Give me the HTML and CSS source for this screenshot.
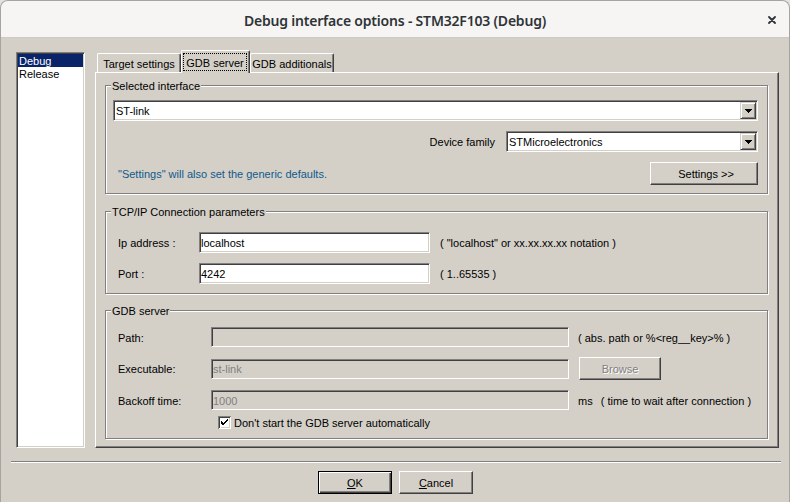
FILE: index.html
```html
<!DOCTYPE html>
<html>
<head>
<meta charset="utf-8">
<title>Debug interface options</title>
<link rel="stylesheet" href="styles.css">
</head>
<body>
<div class="window">
  <div class="titlebar">
    <span></span>
    <span class="title">Debug interface options - STM32F103 (Debug)</span>
    <span class="close"><svg width="8" height="8" viewBox="0 0 8 8"><path d="M1 1 L7 7 M7 1 L1 7" stroke="#2e3436" stroke-width="1.8" stroke-linecap="round"/></svg></span>
  </div>
  <div class="client">
    <div class="main">
      <div class="list">
        <div class="item sel">Debug</div>
        <div class="item">Release</div>
      </div>
      <div class="tabs">
        <div class="tabrow">
          <div class="tab t1">Target settings</div>
          <div class="tab active"><span class="focus">GDB server</span></div>
          <div class="tab t3">GDB additionals</div>
        </div>
        <div class="panel">
          <div class="group g1">
            <div class="gtitle">Selected interface</div>
            <div class="combo wide"><span class="ctext">ST-link</span><span class="arrow"><svg width="7" height="4" viewBox="0 0 7 4"><polygon points="0,0 7,0 3.5,4" fill="#000"/></svg></span></div>
            <div class="row family-row">
              <span class="lbl-family">Device family</span>
              <div class="combo family"><span class="ctext">STMicroelectronics</span><span class="arrow"><svg width="7" height="4" viewBox="0 0 7 4"><polygon points="0,0 7,0 3.5,4" fill="#000"/></svg></span></div>
            </div>
            <div class="row settings-row">
              <span class="hint">"Settings" will also set the generic defaults.</span>
              <button class="btn settings">Settings &gt;&gt;</button>
            </div>
          </div>
          <div class="group g2">
            <div class="gtitle">TCP/IP Connection parameters</div>
            <div class="row field-row ip-row">
              <span class="lbl lbl2">Ip address :</span>
              <div class="input in2">localhost</div>
              <span class="note">( "localhost" or xx.xx.xx.xx notation )</span>
            </div>
            <div class="row field-row port-row">
              <span class="lbl lbl2">Port :</span>
              <div class="input in2">4242</div>
              <span class="note">( 1..65535 )</span>
            </div>
          </div>
          <div class="group g3">
            <div class="gtitle">GDB server</div>
            <div class="row field-row r3 path-row">
              <span class="lbl lbl3">Path:</span>
              <div class="input in3 disabled"></div>
              <span class="note n3">( abs. path or %&lt;reg__key&gt;% )</span>
            </div>
            <div class="row field-row r3 exe-row">
              <span class="lbl lbl3">Executable:</span>
              <div class="input in3 disabled">st-link</div>
              <button class="btn browse" disabled>Browse</button>
            </div>
            <div class="row field-row r3 back-row">
              <span class="lbl lbl3">Backoff time:</span>
              <div class="input in3 disabled">1000</div>
              <span class="note n3">ms</span>
              <span class="note wait">( time to wait after connection )</span>
            </div>
            <div class="row check-row">
              <span class="checkbox"><svg width="13" height="13" viewBox="0 0 13 13"><rect x="0" y="0" width="13" height="13" fill="#fff"/><path d="M0.5 12.5 V0.5 H12.5" stroke="#808080" fill="none"/><path d="M1.5 11.5 V1.5 H11.5" stroke="#404040" fill="none"/><path d="M1.5 12.5 H12.5 V0.5" stroke="#fff" fill="none"/><path d="M2.5 11.5 H11.5 V1.5" stroke="#d4d0c8" fill="none"/><polygon points="3,5 5,7 9.5,2.5 9.5,5 5,9.5 3,7.5" fill="#000"/></svg></span>
              <span class="check-label">Don't start the GDB server automatically</span>
            </div>
          </div>
        </div>
      </div>
    </div>
    <div class="sep"></div>
    <div class="buttons">
      <button class="btn dlg default"><u>O</u>K</button>
      <button class="btn dlg"><u>C</u>ancel</button>
    </div>
  </div>
</div>
</body>
</html>
```
FILE: styles.css
```css
html, body {
  margin: 0;
  padding: 0;
  background: #e4e2df;
}
body {
  width: 790px;
  height: 502px;
  overflow: hidden;
}
.window {
  box-sizing: border-box;
  width: 790px;
  height: 502px;
  border: 1px solid #a7a39e;
  border-bottom: none;
  border-radius: 8px 8px 0 0;
  background: #d4d0c8;
  overflow: hidden;
  display: flex;
  flex-direction: column;
  font-family: "Liberation Sans", Arial, sans-serif;
  font-size: 11px;
  line-height: 13px;
  color: #000;
}
.titlebar {
  height: 34px;
  padding-top: 2px;
  background: #f6f5f4;
  border-bottom: 1px solid #cdc9c4;
  display: grid;
  grid-template-columns: 1fr auto 1fr;
  align-items: center;
  flex: none;
}
.title {
  font-family: "Noto Sans", "DejaVu Sans", sans-serif;
  font-weight: 600;
  font-size: 14px;
  letter-spacing: -0.2px;
  color: #2e3436;
  white-space: nowrap;
}
.close {
  justify-self: end;
  margin-right: 13px;
  width: 8px;
  height: 8px;
  display: flex;
}
.client {
  flex: 1;
  padding: 12px 10px 0 15px;
}
.main {
  display: flex;
}
.list {
  box-sizing: border-box;
  width: 69px;
  margin-top: 2px;
  padding: 1px;
  background: #fff;
  border-top: 1px solid #808080;
  border-left: 1px solid #808080;
  border-right: 1px solid #fff;
  border-bottom: 1px solid #fff;
  box-shadow: inset 1px 1px #404040, inset -1px -1px #d4d0c8;
}
.item {
  padding-left: 1px;
  height: 13px;
  line-height: 15px;
  white-space: nowrap;
}
.item.sel {
  background: #0a246a;
  color: #fff;
}
.tabs {
  flex: 1;
  margin-left: 10px;
  display: flex;
  flex-direction: column;
}
.tabrow {
  display: flex;
  align-items: flex-end;
  height: 22px;
  padding-left: 2px;
}
.tab {
  box-sizing: border-box;
  height: 19px;
  padding-top: 4px;
  text-align: center;
  white-space: nowrap;
  border-top: 1px solid #fff;
  border-left: 1px solid #fff;
  border-right: 1px solid #404040;
  border-radius: 2px 2px 0 0;
  box-shadow: inset -1px 0 #808080;
  background: #d4d0c8;
}
.tab.t1, .tab.t3 {
  width: 84px;
}
.tab.active {
  width: 69px;
  height: 23px;
  margin-bottom: -1px;
  padding-top: 2px;
  position: relative;
  z-index: 1;
  text-align: left;
}
.focus {
  box-sizing: border-box;
  display: inline-block;
  width: 64px;
  height: 18px;
  margin-left: 1px;
  padding-top: 3px;
  text-align: center;
  border: 1px dotted #000;
}
.panel {
  box-sizing: border-box;
  border-top: 1px solid #fff;
  border-left: 1px solid #fff;
  border-right: 1px solid #404040;
  border-bottom: 1px solid #404040;
  box-shadow: inset -1px -1px #808080;
  padding: 12px 10px 8px 9px;
}
.group {
  border: 1px solid #808080;
  box-shadow: inset 1px 1px #fff, 1px 1px #fff;
  padding: 0 9px 8px 7px;
}
.g2 {
  margin-top: 17px;
  padding-bottom: 9px;
}
.g3 {
  margin-top: 16px;
}
.gtitle {
  width: fit-content;
  margin: -7px 0 0 -2px;
  padding: 0 1px;
  height: 13px;
  line-height: 15px;
  background: #d4d0c8;
  white-space: nowrap;
}
.combo {
  box-sizing: border-box;
  height: 21px;
  padding: 1px;
  display: flex;
  align-items: center;
  background: #fff;
  border-top: 1px solid #808080;
  border-left: 1px solid #808080;
  border-right: 1px solid #fff;
  border-bottom: 1px solid #fff;
  box-shadow: inset 1px 1px #404040, inset -1px -1px #d4d0c8;
}
.combo.wide {
  margin-top: 8px;
}
.ctext {
  flex: 1;
  padding-left: 1px;
  padding-top: 2px;
  white-space: nowrap;
}
.arrow {
  box-sizing: border-box;
  width: 16px;
  height: 17px;
  display: flex;
  align-items: center;
  justify-content: center;
  background: #d4d0c8;
  border-top: 1px solid #d4d0c8;
  border-left: 1px solid #d4d0c8;
  border-right: 1px solid #404040;
  border-bottom: 1px solid #404040;
  box-shadow: inset 1px 1px #fff, inset -1px -1px #808080;
}
.arrow svg {
  display: block;
  shape-rendering: crispEdges;
}
.row {
  display: flex;
  align-items: center;
}
.lbl-family, .hint, .lbl, .note, .check-label {
  padding-top: 2px;
}
.family-row {
  margin-top: 10px;
  justify-content: flex-end;
  gap: 11px;
}
.combo.family {
  width: 252px;
}
.settings-row {
  margin-top: 10px;
  justify-content: space-between;
}
.hint {
  margin-left: 5px;
  color: #105a8c;
  white-space: nowrap;
}
.btn {
  box-sizing: border-box;
  margin: 0;
  padding: 2px 0 0 0;
  font-family: "Liberation Sans", Arial, sans-serif;
  font-size: 11px;
  line-height: 13px;
  color: #000;
  background: #d4d0c8;
  border-top: 1px solid #fff;
  border-left: 1px solid #fff;
  border-right: 1px solid #404040;
  border-bottom: 1px solid #404040;
  border-radius: 0;
  box-shadow: inset -1px -1px #808080;
  height: 23px;
}
.btn.settings {
  width: 108px;
  padding-left: 4px;
}
.field-row {
  padding-left: 5px;
}
.ip-row {
  margin-top: 14px;
}
.port-row {
  margin-top: 10px;
}
.lbl {
  white-space: nowrap;
  flex: none;
}
.lbl2 {
  width: 81px;
}
.lbl3 {
  width: 93px;
}
.input {
  box-sizing: border-box;
  display: flex;
  align-items: center;
  padding: 2px 0 0 1px;
  background: #fff;
  border-top: 1px solid #808080;
  border-left: 1px solid #808080;
  border-right: 1px solid #fff;
  border-bottom: 1px solid #fff;
  box-shadow: inset 1px 1px #404040, inset -1px -1px #d4d0c8;
  white-space: nowrap;
  flex: none;
}
.in2 {
  width: 231px;
  height: 21px;
}
.in3 {
  width: 358px;
  height: 20px;
}
.input.disabled {
  background: #d4d0c8;
  color: #808080;
}
.note {
  margin-left: 10px;
  white-space: nowrap;
}
.note.n3 {
  margin-left: 9px;
}
.note.wait {
  margin-left: 8px;
}
.r3 {
  height: 22px;
  margin-top: 9px;
}
.exe-row {
  height: 23px;
}
.btn.browse {
  width: 82px;
  margin-left: 10px;
  color: #808080;
  text-shadow: 1px 1px #fff;
}
.check-row {
  height: 15px;
  margin-top: 4px;
}
.checkbox {
  width: 13px;
  height: 13px;
  margin-left: 105px;
  display: flex;
}
.checkbox svg {
  display: block;
  shape-rendering: crispEdges;
}
.check-label {
  margin-left: 3px;
  white-space: nowrap;
}
.sep {
  height: 0;
  margin: 13px -2px 0 -5px;
  border-top: 1px solid #808080;
  border-bottom: 1px solid #fff;
}
.buttons {
  display: flex;
  justify-content: center;
  gap: 7px;
  margin: 8px -1px 0 -5px;
}
.btn.dlg {
  width: 74px;
}
.btn.default {
  border: 1px solid #000;
  box-shadow: inset 1px 1px #fff, inset -1px -1px #404040, inset -2px -2px #808080;
}
```
